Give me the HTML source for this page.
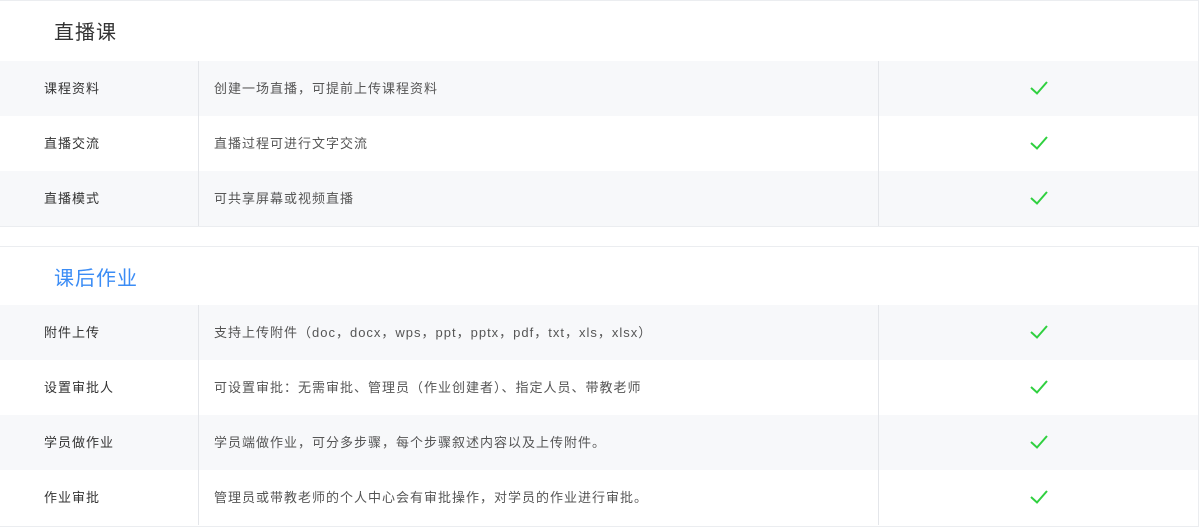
<!DOCTYPE html>
<html><head><meta charset="utf-8"><style>
*{margin:0;padding:0;box-sizing:border-box}
body{width:1200px;height:529px;background:#fff;font-family:"Liberation Sans","Noto Sans CJK SC",sans-serif;position:relative;overflow:hidden}
.box{position:absolute;left:-1px;width:1200px;border:1px solid #ebedf0;background:#fff}
.title{height:59px;padding-left:54px;font-size:20px;line-height:64px;color:#333;letter-spacing:1px}
.blue{color:#3b8cf5}
.row{height:55px;display:flex;font-size:13px;line-height:55px;letter-spacing:1px}
.c1{width:199px;padding-left:44px;color:#333;border-right:1px solid #e4e6ea}
.c2{width:680px;padding-left:15px;color:#555;border-right:1px solid #e4e6ea}
.c3{flex:1;position:relative}
.c3 svg{position:absolute;left:150px;top:19px}
</style></head><body>
<div class="box" style="top:0;height:227px">
<div class="title" style="height:60px">直播课</div>
<div class="row" style="background:#f7f8fa"><div class="c1">课程资料</div><div class="c2">创建一场直播，可提前上传课程资料</div><div class="c3"><svg width="20" height="16"><path d="M2 8l6 5.5L18 2" fill="none" stroke="#2fd03f" stroke-width="2"/></svg></div></div>
<div class="row" style="background:#fff"><div class="c1">直播交流</div><div class="c2">直播过程可进行文字交流</div><div class="c3"><svg width="20" height="16"><path d="M2 8l6 5.5L18 2" fill="none" stroke="#2fd03f" stroke-width="2"/></svg></div></div>
<div class="row" style="background:#f7f8fa"><div class="c1">直播模式</div><div class="c2">可共享屏幕或视频直播</div><div class="c3"><svg width="20" height="16"><path d="M2 8l6 5.5L18 2" fill="none" stroke="#2fd03f" stroke-width="2"/></svg></div></div>
</div>
<div class="box" style="top:246px;height:281px">
<div class="title blue" style="height:58px">课后作业</div>
<div class="row" style="background:#f7f8fa"><div class="c1">附件上传</div><div class="c2">支持上传附件（doc，docx，wps，ppt，pptx，pdf，txt，xls，xlsx）</div><div class="c3"><svg width="20" height="16"><path d="M2 8l6 5.5L18 2" fill="none" stroke="#2fd03f" stroke-width="2"/></svg></div></div>
<div class="row" style="background:#fff"><div class="c1">设置审批人</div><div class="c2">可设置审批：无需审批、管理员（作业创建者）、指定人员、带教老师</div><div class="c3"><svg width="20" height="16"><path d="M2 8l6 5.5L18 2" fill="none" stroke="#2fd03f" stroke-width="2"/></svg></div></div>
<div class="row" style="background:#f7f8fa"><div class="c1">学员做作业</div><div class="c2">学员端做作业，可分多步骤，每个步骤叙述内容以及上传附件。</div><div class="c3"><svg width="20" height="16"><path d="M2 8l6 5.5L18 2" fill="none" stroke="#2fd03f" stroke-width="2"/></svg></div></div>
<div class="row" style="background:#fff"><div class="c1">作业审批</div><div class="c2">管理员或带教老师的个人中心会有审批操作，对学员的作业进行审批。</div><div class="c3"><svg width="20" height="16"><path d="M2 8l6 5.5L18 2" fill="none" stroke="#2fd03f" stroke-width="2"/></svg></div></div>
</div>
</body></html>
